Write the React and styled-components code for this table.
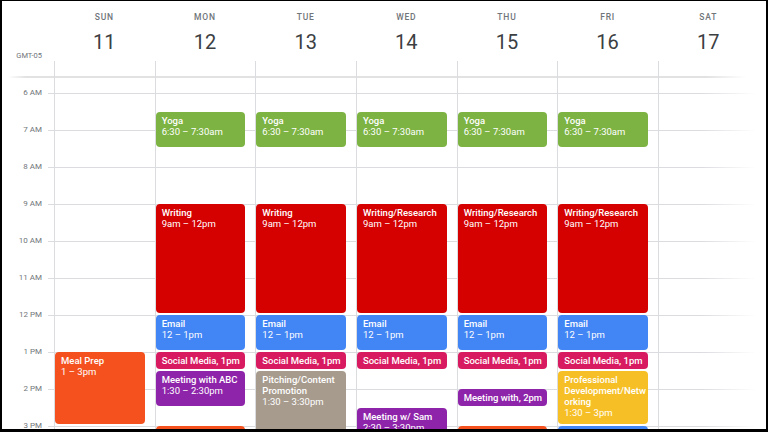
import React from 'react';
import styled, { createGlobalStyle } from 'styled-components';

const HOUR = 37;
const FIRST_HOUR = 6;
const TOP_OFFSET = 15;
const COL = '100.67px';

const GREEN = '#7cb342';
const RED = '#d50000';
const BLUE = '#4285f4';
const PINK = '#d81b60';
const PURPLE = '#8e24aa';
const ORANGE = '#f4511e';
const COCOA = '#a79b8e';
const YELLOW = '#f6bf26';

const days = [
  { name: 'SUN', date: 11 },
  { name: 'MON', date: 12 },
  { name: 'TUE', date: 13 },
  { name: 'WED', date: 14 },
  { name: 'THU', date: 15 },
  { name: 'FRI', date: 16 },
  { name: 'SAT', date: 17 },
];

const hours = ['6 AM', '7 AM', '8 AM', '9 AM', '10 AM', '11 AM', '12 PM', '1 PM', '2 PM', '3 PM'];

const yoga = { title: 'Yoga', time: '6:30 – 7:30am', start: 6.5, end: 7.5, color: GREEN };
const email = { title: 'Email', time: '12 – 1pm', start: 12, end: 13, color: BLUE };
const social = { title: 'Social Media, 1pm', start: 13, end: 13.5, color: PINK };
const writing = (title) => ({ title, time: '9am – 12pm', start: 9, end: 12, color: RED });

const events = [
  [
    { title: 'Meal Prep', time: '1 – 3pm', start: 13, end: 15, color: ORANGE },
  ],
  [
    yoga, writing('Writing'), email, social,
    { title: 'Meeting with ABC', time: '1:30 – 2:30pm', start: 13.5, end: 14.5, color: PURPLE },
    { title: '', start: 15, end: 16, color: ORANGE },
  ],
  [
    yoga, writing('Writing'), email, social,
    { title: 'Pitching/Content Promotion', time: '1:30 – 3:30pm', start: 13.5, end: 15.5, color: COCOA },
  ],
  [
    yoga, writing('Writing/Research'), email, social,
    { title: 'Meeting w/ Sam', time: '2:30 – 3:30pm', start: 14.5, end: 15.5, color: PURPLE },
  ],
  [
    yoga, writing('Writing/Research'), email, social,
    { title: 'Meeting with, 2pm', start: 14, end: 14.5, color: PURPLE },
    { title: '', start: 15, end: 16, color: ORANGE },
  ],
  [
    yoga, writing('Writing/Research'), email, social,
    { title: 'Professional Development/Networking', time: '1:30 – 3pm', start: 13.5, end: 15, color: YELLOW },
    { title: '', start: 15, end: 16, color: BLUE },
  ],
  [],
];

function App() {
  return (
    <>
      <GlobalStyle />
      <Frame>
        <HeaderRow>
          <Zone>GMT-05</Zone>
          {days.map((day) => (
            <DayHead key={day.name}>
              <DayName>{day.name}</DayName>
              <DayNum>{day.date}</DayNum>
            </DayHead>
          ))}
          <div />
        </HeaderRow>

        <AllDayRow>
          <div />
          {days.map((day) => <AllDayCell key={day.name} />)}
          <div />
        </AllDayRow>

        <Body>
          <Gutter>
            {hours.map((h) => (
              <HourSlot key={h}>
                <HourLabel>{h}</HourLabel>
              </HourSlot>
            ))}
          </Gutter>

          <DaysArea>
            {days.map((day, i) => (
              <DayColumn key={day.name}>
                {events[i].map((ev, j) => {
                  const compact = ev.end - ev.start <= 0.5;
                  return (
                    <Event
                      key={j}
                      $color={ev.color}
                      style={{
                        top: TOP_OFFSET + (ev.start - FIRST_HOUR) * HOUR,
                        height: (ev.end - ev.start) * HOUR - 2,
                      }}
                    >
                      <EventTitle>{ev.title}</EventTitle>
                      {!compact && ev.time && <EventTime>{ev.time}</EventTime>}
                    </Event>
                  );
                })}
              </DayColumn>
            ))}
            <div />
          </DaysArea>
        </Body>
      </Frame>
    </>
  );
}

export default App;

const GlobalStyle = createGlobalStyle`
  html, body {
    margin: 0;
    padding: 0;
    background: #fff;
  }
  body {
    font-family: Roboto, "Liberation Sans", sans-serif;
  }
`;

const Frame = styled.div`
  box-sizing: border-box;
  width: 768px;
  height: 432px;
  display: flex;
  flex-direction: column;
  overflow: hidden;

  border-style: solid;
  border-color: #000;
  border-width: 1px 2px 3px 2px;
  background: #fff;
`;

const HeaderRow = styled.div`
  display: grid;
  grid-template-columns: 52px repeat(7, ${COL}) 1fr;
  height: 60px;
  flex-shrink: 0;
`;

const Zone = styled.div`
  align-self: end;
  text-align: right;
  padding-right: 12px;

  font-size: 7.5px;
  line-height: 10px;
  color: #70757a;
`;

const DayHead = styled.div`
  display: flex;
  flex-direction: column;
  align-items: center;
  padding-top: 10px;
`;

const DayName = styled.div`
  font-size: 8.5px;
  font-weight: 500;
  letter-spacing: 0.8px;
  line-height: 12px;
  color: #70757a;
`;

const DayNum = styled.div`
  margin-top: 7px;
  font-size: 20px;
  line-height: 24px;
  color: #3c4043;
`;

const AllDayRow = styled.div`
  display: grid;
  grid-template-columns: 52px repeat(7, ${COL}) 1fr;
  height: 17px;
  flex-shrink: 0;

  background: linear-gradient(
      to right,
      rgba(224, 224, 224, 0) 6px,
      #e2e2e2 24px,
      #e2e2e2 calc(100% - 60px),
      rgba(224, 224, 224, 0) calc(100% - 20px)
    )
    left bottom / 100% 2px no-repeat;
`;

const AllDayCell = styled.div`
  border-left: 1px solid #dadce0;
`;

const Body = styled.div`
  flex: 1;
  min-height: 0;
  display: flex;
  overflow: hidden;
`;

const Gutter = styled.div`
  width: 52px;
  flex-shrink: 0;
  padding-top: ${TOP_OFFSET}px;
`;

const HourSlot = styled.div`
  height: ${HOUR}px;
  display: flex;
  justify-content: flex-end;
  padding-right: 12px;

  background: linear-gradient(#dadce0, #dadce0) right top / 6px 1px no-repeat;
`;

const HourLabel = styled.div`
  margin-top: -5px;
  font-size: 8px;
  line-height: 10px;
  color: #70757a;
`;

const DaysArea = styled.div`
  flex: 1;
  display: grid;
  grid-template-columns: repeat(7, ${COL}) 1fr;

  background-image:
    linear-gradient(to right, rgba(255, 255, 255, 0) calc(100% - 65px), #fff calc(100% - 10px)),
    linear-gradient(to bottom, #dadce0 1px, transparent 1px);
  background-size: 100% 100%, 100% ${HOUR}px;
  background-position: 0 0, 0 ${TOP_OFFSET}px;
  background-repeat: no-repeat, repeat;
`;

const DayColumn = styled.div`
  position: relative;
  border-left: 1px solid #dadce0;
`;

const Event = styled.div`
  position: absolute;
  left: 0;
  width: calc(100% - 10px);
  box-sizing: border-box;
  overflow: hidden;

  padding: 3px 1.5px 0 6px;
  border-radius: 4px;
  background: ${props => props.$color};
  color: #fff;

  font-size: 9.5px;
  line-height: 11px;
  overflow-wrap: anywhere;
`;

const EventTitle = styled.div`
  font-weight: 500;
`;

const EventTime = styled.div`
  font-weight: 400;
`;
